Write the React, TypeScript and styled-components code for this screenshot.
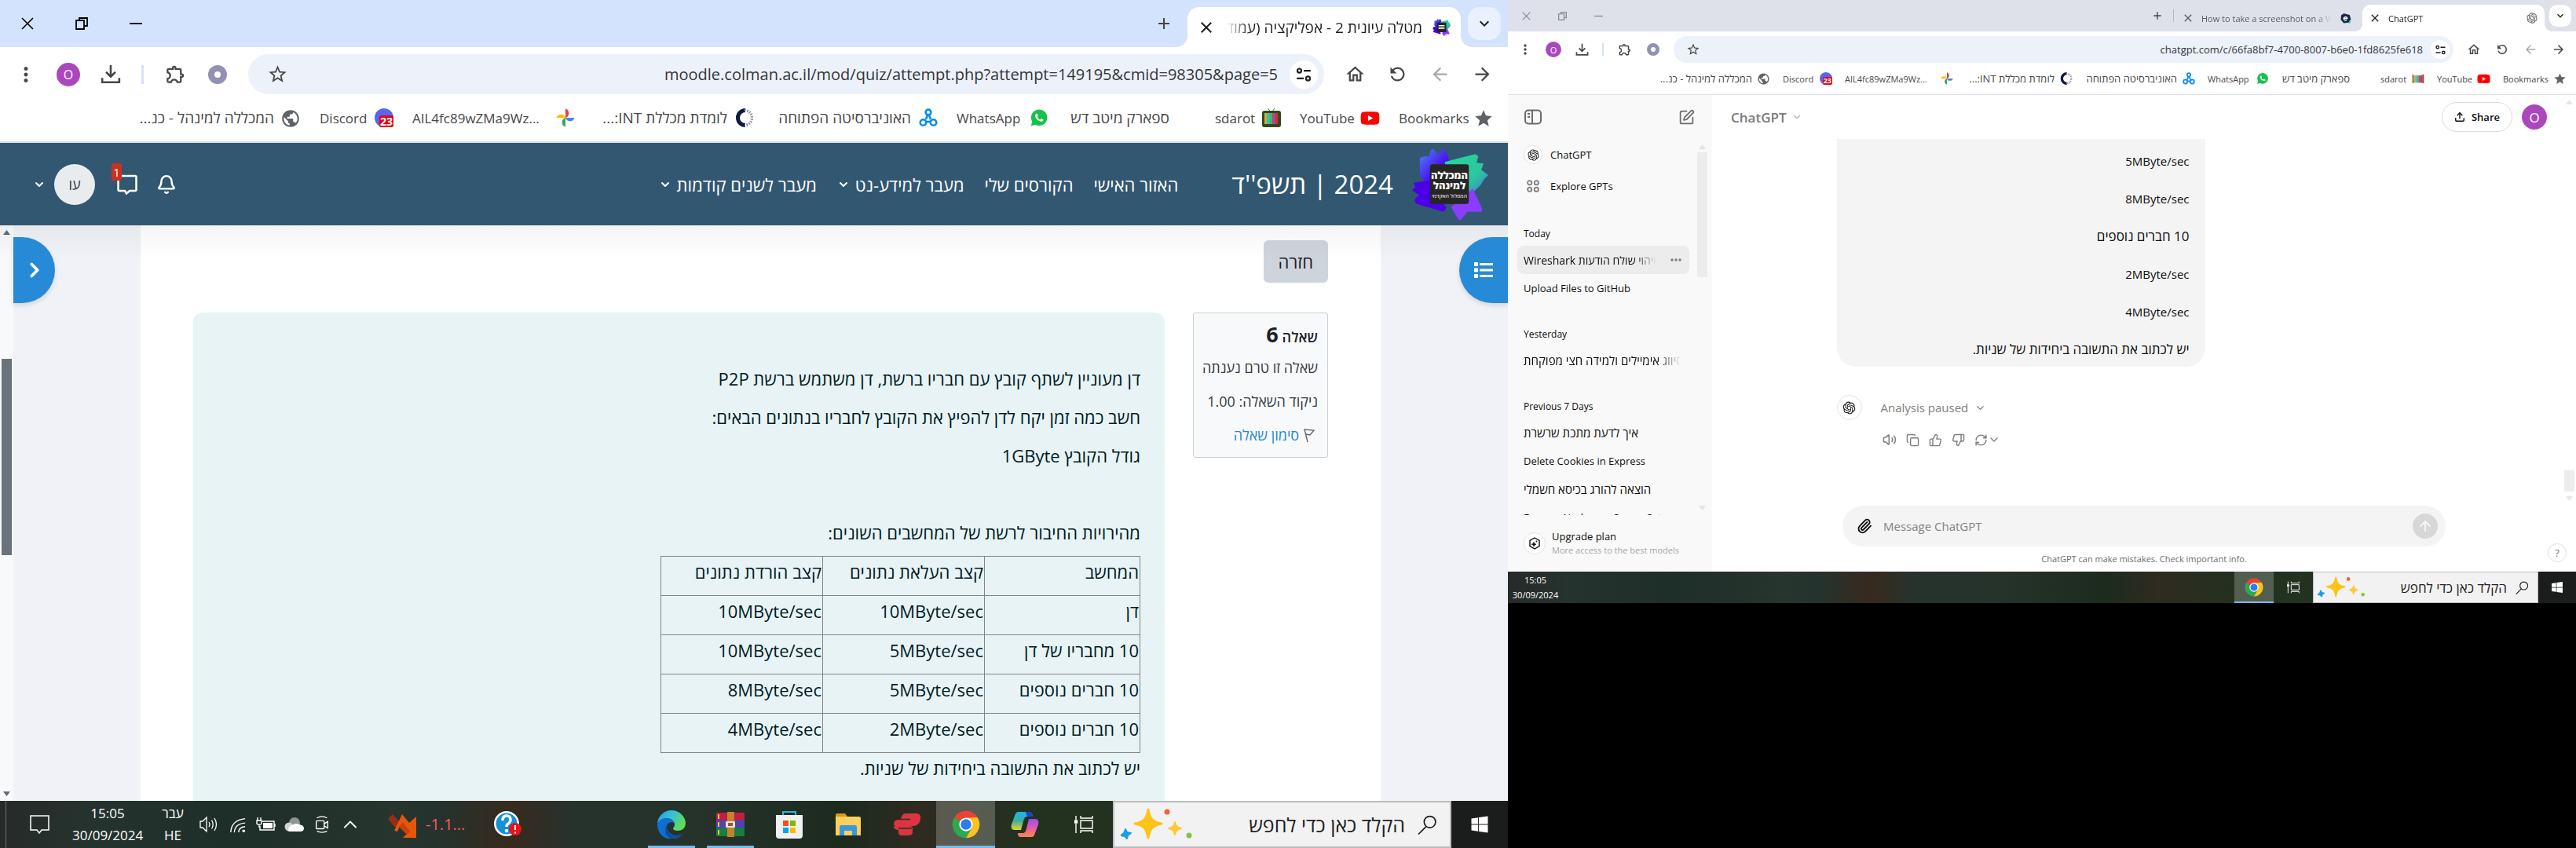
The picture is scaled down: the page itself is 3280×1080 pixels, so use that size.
import React from 'react';
import styled, { createGlobalStyle, css, ThemeProvider } from 'styled-components';
import {
  MdAdd,
  MdArrowBack,
  MdArrowForward,
  MdClose,
  MdKeyboardArrowDown,
  MdMoreVert,
  MdOutlineExtension,
  MdOutlineHome,
  MdPublic,
  MdRefresh,
  MdStar,
  MdStarBorder,
} from 'react-icons/md';
import { IoLogoWhatsapp } from 'react-icons/io';
import { FaYoutube, FaWindows } from 'react-icons/fa';
import { RiOpenaiFill } from 'react-icons/ri';
import {
  ArrowUp,
  Bell,
  ChevronDown,
  ChevronRight,
  ChevronUp,
  Copy,
  Paperclip,
  RefreshCw,
  SquarePen,
  ThumbsDown,
  ThumbsUp,
  Upload,
  Volume2,
} from 'lucide-react';

type Scaled = { theme: { k?: number } };

/* Browser chrome and taskbar sizes are given for the large screen and scaled for the small one. */
const s = (n: number) => ({ theme }: Scaled) => `${Math.round(n * (theme.k ?? 1))}px`;

const GlobalStyle = createGlobalStyle`
  *, *::before, *::after { box-sizing: border-box; }
  body { margin: 0; background: #000; font-family: "Open Sans", "Noto Sans", sans-serif; }
  button, input { font: inherit; color: inherit; margin: 0; padding: 0; border: 0; background: none; outline: none; }
  button { cursor: pointer; }
  a { color: inherit; text-decoration: none; }
  p, h1, h2, h3, ul { margin: 0; padding: 0; font-weight: 400; list-style: none; }
  svg { display: block; flex: none; }
`;

/* ---------- shared pieces ---------- */

const Desktop = styled.div`
  display: grid;
  grid-template-columns: 1920fr 1360fr;
  align-items: start;
`;

const Screen = styled.section<{ $ratio: string }>`
  aspect-ratio: ${(p) => p.$ratio};
  min-width: 0;
  min-height: 0;
  display: flex;
  flex-direction: column;
  overflow: hidden;
  background: #fff;
`;

const Glyph = styled.span<{ $size: number; $color?: string; $flip?: boolean }>`
  display: inline-flex;
  flex: none;
  color: ${(p) => p.$color ?? 'inherit'};
  svg {
    width: ${(p) => s(p.$size)(p)};
    height: ${(p) => s(p.$size)(p)};
    ${(p) => p.$flip && css`transform: scaleX(-1);`}
  }
`;

/* ---------- browser chrome ---------- */

const TabStrip = styled.div<{ $bg: string }>`
  display: flex;
  align-items: flex-end;
  direction: rtl;
  flex: none;
  height: ${s(60)};
  padding-right: ${s(9)};
  background: ${(p) => p.$bg};
`;

const TabSearch = styled.button<{ $bg: string }>`
  display: grid;
  place-items: center;
  width: ${s(42)};
  height: ${s(42)};
  margin-bottom: ${s(9)};
  margin-left: ${s(9)};
  border-radius: ${s(15)};
  background: ${(p) => p.$bg};
  color: #1f1f1f;
`;

const TabShape = styled.div<{ $active?: boolean }>`
  position: relative;
  display: flex;
  align-items: center;
  gap: ${s(13)};
  width: ${s(348)};
  height: ${s(51)};
  padding: 0 ${s(12)};
  color: ${(p) => (p.$active ? '#1f1f1f' : '#5a5c60')};
  ${(p) =>
    p.$active &&
    css`
      background: #fff;
      border-radius: ${s(15)(p as Scaled)} ${s(15)(p as Scaled)} 0 0;
      &::before,
      &::after {
        content: '';
        position: absolute;
        bottom: 0;
        width: ${s(15)(p as Scaled)};
        height: ${s(15)(p as Scaled)};
      }
      &::before {
        right: 100%;
        background: radial-gradient(circle at 0 0, transparent 70%, #fff 71%);
      }
      &::after {
        left: 100%;
        background: radial-gradient(circle at 100% 0, transparent 70%, #fff 71%);
      }
    `}
  & + & {
    margin-right: ${s(9)};
  }
`;

const TabTitle = styled.span<{ $dir: 'rtl' | 'ltr' }>`
  flex: 1;
  min-width: 0;
  direction: ${(p) => p.$dir};
  font-size: ${(p) => s(p.$dir === 'rtl' ? 19 : 17)(p)};
  white-space: nowrap;
  mask-image: linear-gradient(${(p) => (p.$dir === 'rtl' ? 'to left' : 'to right')}, #000 88%, transparent);
`;

const PlainButton = styled.button`
  display: grid;
  place-items: center;
  flex: none;
`;

const NewTab = styled(PlainButton)`
  width: ${s(54)};
  height: ${s(60)};
  margin-right: ${s(3)};
  color: #444;
`;

const TabDivider = styled.span`
  width: 1px;
  height: 16px;
  margin: 0 2px 12px 0;
  background: #b4b7bd;
`;

const WindowControls = styled.div<{ $color: string }>`
  display: flex;
  direction: ltr;
  height: 100%;
  margin-right: auto;
  color: ${(p) => p.$color};
  button {
    width: ${s(69)};
  }
`;

const Toolbar = styled.div`
  display: flex;
  align-items: center;
  direction: rtl;
  flex: none;
  height: ${s(60)};
  padding: ${s(9)} ${s(6)} 0;
  color: #474747;
`;

const ToolButton = styled(PlainButton)<{ $dim?: boolean }>`
  width: ${s(54)};
  height: 100%;
  color: ${(p) => (p.$dim ? '#a9a9a9' : 'inherit')};
`;

const ToolDivider = styled.span`
  width: ${s(3)};
  height: ${s(24)};
  margin: 0 ${s(13)} 0 ${s(12)};
  background: #d3e3fd;
`;

const AddressBar = styled.div`
  display: flex;
  align-items: center;
  flex: 1;
  min-width: 0;
  height: ${s(51)};
  margin: 0 ${s(12)};
  padding: 0 ${s(8)} 0 ${s(24)};
  border-radius: ${s(26)};
  background: #edf1fa;
  input {
    flex: 1;
    min-width: 0;
    direction: ltr;
    text-align: right;
    padding: 0 ${s(15)};
    font-size: ${s(20)};
    color: #333638;
  }
`;

const SiteInfo = styled(PlainButton)`
  width: ${s(36)};
  height: ${s(36)};
  border-radius: 50%;
  background: #fff;
  color: #1f1f1f;
`;

const ProfileDot = styled.span`
  display: grid;
  place-items: center;
  width: ${s(30)};
  height: ${s(30)};
  border-radius: 50%;
  background: #ab47bc;
  color: #fff;
  font-size: ${s(16)};
`;

const GreyRing = styled.span`
  width: ${s(24)};
  height: ${s(24)};
  border: ${s(8)} solid #9191b5;
  border-radius: 50%;
`;

const Bookmarks = styled.nav`
  display: flex;
  align-items: center;
  gap: ${s(24)};
  direction: rtl;
  flex: none;
  height: ${s(62)};
  padding-right: ${s(18)};
  border-bottom: ${s(2)} solid #dfe1e4;
  color: #474747;
`;

const Bookmark = styled.a<{ $width: number; $latin?: boolean }>`
  display: flex;
  align-items: center;
  gap: ${s(10)};
  white-space: nowrap;
  font-size: ${(p) => s(p.$latin ? 17 : 19)(p)};
  > span:last-child {
    width: ${(p) => s(p.$width)(p)};
    direction: ${(p) => (p.$latin ? 'ltr' : 'rtl')};
  }
`;

const FavSlot = styled.span`
  position: relative;
  display: grid;
  place-items: center;
  flex: none;
  width: ${s(24)};
  height: ${s(24)};
`;

const FavBadge = styled.b`
  position: absolute;
  right: 0;
  bottom: 0;
  padding: 0 1px;
  border-radius: 2px;
  background: #e30613;
  color: #fff;
  font-size: ${s(14)};
  line-height: ${s(15)};
`;

const TuneIcon = () => (
  <svg viewBox="0 0 20 20" fill="none" stroke="currentColor" strokeWidth="2">
    <circle cx="5" cy="5.5" r="2.3" />
    <path d="M10 5.5h8M2 14.5h8" />
    <circle cx="15" cy="14.5" r="2.3" />
  </svg>
);

const CloseIcon = () => (
  <svg viewBox="0 0 16 16" fill="none" stroke="currentColor" strokeWidth="1.6">
    <path d="M1 1l14 14M15 1L1 15" />
  </svg>
);

const RestoreIcon = () => (
  <svg viewBox="0 0 16 16" fill="none" stroke="currentColor" strokeWidth="1.8">
    <path d="M1 4h10v11H1zM5 4V1h10v10h-4" />
  </svg>
);

const MinimiseIcon = () => (
  <svg viewBox="0 0 16 16" fill="none" stroke="currentColor" strokeWidth="1.8">
    <path d="M0 8h16" />
  </svg>
);

const CollegeMark = ({ small }: { small?: boolean }) => (
  <svg viewBox="0 0 100 94">
    <defs>
      <linearGradient id="mark-blue" x1="0" y1="0" x2="1" y2="1">
        <stop offset="0" stopColor="#4a8cf7" />
        <stop offset=".6" stopColor="#4a10f0" />
      </linearGradient>
      <linearGradient id="mark-green" x1="0" y1="0" x2="1" y2="1">
        <stop offset="0" stopColor="#1ddb9b" />
        <stop offset=".6" stopColor="#2fc4a0" />
        <stop offset="1" stopColor="#3377d0" />
      </linearGradient>
    </defs>
    <path d="M10 13q6-3 12-2Q23 2 27 1q5 4 6 9 3-7 7-9 6 6 8 17l-5 22-20 6Q9 38 10 33z" fill="url(#mark-blue)" />
    <path d="M42 18L80 8q4 0 5 3l-2 8 9 1-3 8 9 7-6 6-4 7-17 16-24-20z" fill="url(#mark-green)" />
    <path d="M2 45l22-4 20 36-3 5L6 72q-4-2-2-7l5-4-9-7q5-3 4-4z" fill="#4c00e8" />
    <path d="M50 76l28-24 12 26q1 5-5 4l-14 0-7 9q-3 4-5 0z" fill="#8b3dff" />
    <rect x="23" y="21" width="50" height="51" rx="3" fill="#262626" />
    {small ? (
      <path d="M32 34h32v7H32zM32 47h32v7H32z" fill="#fff" />
    ) : (
      <g fill="#fff" fontFamily='"Open Sans", sans-serif' fontWeight="800" textAnchor="middle">
        <text x="48" y="40" fontSize="13">המכללה</text>
        <text x="48" y="53" fontSize="13">למינהל</text>
        <text x="48" y="64" fontSize="7" fontWeight="400">המסלול האקדמי</text>
      </g>
    )}
  </svg>
);

const SdarotIcon = ({ framed }: { framed?: boolean }) => (
  <svg viewBox="0 0 24 24">
    {framed && <path d="M7 0l5 5 4-5" stroke="#5c7a3c" fill="none" />}
    {framed && <rect x="0" y="3" width="24" height="21" rx="3" fill="#33471f" />}
    {['#c9b62b', '#3bc0c9', '#4bb54b', '#b545b0', '#c93636'].map((c, i) => (
      <rect key={c} x={3 + i * 3.4} y="6" width="3.5" height="14" fill={c} />
    ))}
    {!framed && <path d="M20 4h3v17h-3zM1 4h2v17H1z" fill="#a04040" />}
  </svg>
);

const OpenUIcon = () => (
  <svg viewBox="0 0 24 24" fill="none" stroke="#0a8cf0" strokeWidth="2.6">
    <circle cx="12" cy="5" r="3.4" />
    <circle cx="5.5" cy="18" r="3.8" />
    <circle cx="18.5" cy="18" r="3.8" />
    <path d="M11 8.5L9 14M13 8.5L15 14M9 17h6" />
  </svg>
);

const IntIcon = () => (
  <svg viewBox="0 0 24 24" fill="none">
    <path d="M13 2.500a9.500 9.500 0 0 0 0 19" stroke="#0e1b3d" strokeWidth="5" />
    <path d="M12 2.500a9.500 9.500 0 0 1 0 19" stroke="#8a90a0" strokeWidth="3.500" strokeDasharray="1.6 1.6" />
  </svg>
);

const PinwheelIcon = () => (
  <svg viewBox="0 0 24 24">
    <path d="M12 12V.5a6 6 0 0 1 0 11.500z" fill="#ea4335" />
    <path d="M12 12h11.500a6 6 0 0 1-11.500 0z" fill="#4285f4" />
    <path d="M12 12v11.500a6 6 0 0 1 0-11.500z" fill="#34a853" />
    <path d="M12 12H.5a6 6 0 0 1 11.500 0z" fill="#fbbc04" />
  </svg>
);

const SwirlIcon = () => (
  <svg viewBox="0 0 20 20">
    <path d="M2 6l5-5 3 2-6 8z" fill="#e0245e" />
    <path d="M14 18l5-6-1 6z" fill="#27c4b8" />
    <path d="M3 4l6-2 8 2 2 7-4 6-8 1-5-6z" fill="#13294b" />
    <path d="M7 10h6a3 3 0 1 0-1 2.500" fill="none" stroke="#fff" strokeWidth="1.800" />
  </svg>
);

type TabInfo = { title: string; icon: React.ReactNode; dir: 'rtl' | 'ltr'; active?: boolean };

function Browser({
  tabs,
  url,
  strip,
  button,
  controls,
  large,
}: {
  tabs: TabInfo[];
  url: string;
  strip: string;
  button: string;
  controls: string;
  large?: boolean;
}) {
  const bookmarks: { label: string; width: number; latin?: boolean; icon?: React.ReactNode }[] = [
    { label: 'Bookmarks', width: 87, latin: true, icon: <Glyph $size={26} $color="#5f6368"><MdStar /></Glyph> },
    { label: 'YouTube', width: 68, latin: true, icon: <Glyph $size={25} $color="#f00"><FaYoutube /></Glyph> },
    { label: 'sdarot', width: 50, latin: true, icon: <Glyph $size={24}><SdarotIcon framed={large} /></Glyph> },
    { label: 'ספארק מיטב דש', width: 130 },
    { label: 'WhatsApp', width: 83, latin: true, icon: <Glyph $size={24} $color="#14c24a"><IoLogoWhatsapp /></Glyph> },
    { label: 'האוניברסיטה הפתוחה', width: 176, icon: <Glyph $size={24}><OpenUIcon /></Glyph> },
    { label: 'לומדת מכללת INT:...', width: 170, icon: <Glyph $size={24}><IntIcon /></Glyph> },
    { label: 'AIL4fc89wZMa9Wz...', width: 173, latin: true, icon: <Glyph $size={24}><PinwheelIcon /></Glyph> },
    {
      label: 'Discord',
      width: 60,
      latin: true,
      icon: (
        <>
          <Glyph $size={24}>
            <svg viewBox="0 0 24 24"><circle cx="12" cy="12" r="12" fill="#5865f2" /></svg>
          </Glyph>
          <FavBadge>23</FavBadge>
        </>
      ),
    },
    { label: 'המכללה למינהל - כנ...', width: 173, icon: <Glyph $size={26} $color="#5f6368"><MdPublic /></Glyph> },
  ];
  return (
    <>
      <TabStrip $bg={strip}>
        <TabSearch $bg={button} aria-label="Search tabs">
          <Glyph $size={24}><MdKeyboardArrowDown /></Glyph>
        </TabSearch>
        {tabs.map((t) => (
          <TabShape key={t.title} $active={t.active}>
            <FavSlot>{t.icon}</FavSlot>
            <TabTitle $dir={t.dir}>{t.title}</TabTitle>
            <PlainButton aria-label="Close tab"><Glyph $size={24}><MdClose /></Glyph></PlainButton>
          </TabShape>
        ))}
        {tabs.length > 1 && <TabDivider />}
        <NewTab aria-label="New tab"><Glyph $size={24}><MdAdd /></Glyph></NewTab>
        <WindowControls $color={controls}>
          <PlainButton aria-label="Close window"><Glyph $size={16}><CloseIcon /></Glyph></PlainButton>
          <PlainButton aria-label="Restore window"><Glyph $size={16}><RestoreIcon /></Glyph></PlainButton>
          <PlainButton aria-label="Minimise window"><Glyph $size={16}><MinimiseIcon /></Glyph></PlainButton>
        </WindowControls>
      </TabStrip>
      <Toolbar>
        <ToolButton aria-label="Back"><Glyph $size={27}><MdArrowForward /></Glyph></ToolButton>
        <ToolButton aria-label="Forward" $dim><Glyph $size={27}><MdArrowBack /></Glyph></ToolButton>
        <ToolButton aria-label="Reload"><Glyph $size={27} $flip><MdRefresh /></Glyph></ToolButton>
        <ToolButton aria-label="Home"><Glyph $size={27}><MdOutlineHome /></Glyph></ToolButton>
        <AddressBar>
          <SiteInfo aria-label="Site information"><Glyph $size={22}><TuneIcon /></Glyph></SiteInfo>
          <input aria-label="Address" defaultValue={url} />
          <PlainButton aria-label="Bookmark this page"><Glyph $size={27}><MdStarBorder /></Glyph></PlainButton>
        </AddressBar>
        <ToolButton aria-label="Extension"><GreyRing /></ToolButton>
        <ToolButton aria-label="Extensions"><Glyph $size={27}><MdOutlineExtension /></Glyph></ToolButton>
        <ToolDivider />
        <ToolButton aria-label="Downloads">
          <Glyph $size={26}>
            <svg viewBox="0 0 24 24" fill="none" stroke="currentColor" strokeWidth="2.4">
              <path d="M12 1v13M6.500 9l5.500 5.500L17.500 9M2 16v5h20v-5" />
            </svg>
          </Glyph>
        </ToolButton>
        <ToolButton aria-label="Profile"><ProfileDot>O</ProfileDot></ToolButton>
        <ToolButton aria-label="Menu"><Glyph $size={30}><MdMoreVert /></Glyph></ToolButton>
      </Toolbar>
      <Bookmarks>
        {bookmarks.map((b) => (
          <Bookmark key={b.label} href="#" $width={b.width} $latin={b.latin}>
            <FavSlot>{b.icon}</FavSlot>
            <span>{b.label}</span>
          </Bookmark>
        ))}
      </Bookmarks>
    </>
  );
}

/* ---------- taskbar ---------- */

const Bar = styled.footer`
  display: flex;
  direction: rtl;
  flex: none;
  height: ${s(60)};
  color: #fff;
  background: linear-gradient(
    90deg,
    #272a28 0,
    #25332f 6%,
    #1e2e28 15%,
    #26352e 26%,
    #24332d 29%,
    #38291e 34%,
    #26332d 38%,
    #25332b 46%,
    #1d2a1e 56%,
    #2f2b20 61%,
    #23311f 68%,
    #243622 100%
  );
`;

const StartButton = styled(PlainButton)`
  width: ${s(72)};
  background: #1b1c1c;
`;

const SearchBox = styled.label`
  display: flex;
  align-items: center;
  width: ${s(431)};
  padding: 0 ${s(16)} 0 ${s(8)};
  border: ${s(2)} solid #bcbcbc;
  background: #f2f2f2;
  color: #1b1b1b;
  input {
    flex: 1;
    min-width: 0;
    padding-right: ${s(16)};
    font-size: ${s(25)};
  }
  input::placeholder {
    color: #222;
    opacity: 1;
  }
`;

const Sparkles = styled.svg`
  width: ${s(92)};
  height: ${s(54)};
`;

const AppButton = styled(PlainButton)<{ $mark?: 'open' | 'active' }>`
  width: ${s(75)};
  ${(p) =>
    p.$mark &&
    css`
      background: linear-gradient(#76b9ed, #76b9ed) center bottom / ${p.$mark === 'active' ? '100%' : '80%'} ${s(3)(p as Scaled)}
        no-repeat ${p.$mark === 'active' ? 'rgba(255, 255, 255, 0.22)' : 'transparent'};
    `}
`;

const Tray = styled.div`
  display: flex;
  align-items: center;
  direction: ltr;
  margin-right: auto;
  font-size: ${s(17)};
  line-height: ${s(28)};
  text-align: center;
`;

const ShowDesktop = styled(PlainButton)`
  width: 8px;
  height: 100%;
  border-right: 1px solid #6d736f;
`;

const NoticeButton = styled(PlainButton)`
  width: 84px;
`;

const Clock = styled.time<{ $width: number }>`
  width: ${(p) => p.$width}px;
  white-space: pre-line;
`;

const Language = styled.span`
  width: 66px;
  padding-left: 10px;
  white-space: pre-line;
`;

const TrayButton = styled(PlainButton)`
  width: 36px;
`;

const Stock = styled.span`
  display: flex;
  align-items: center;
  gap: 12px;
  margin: 0 36px 0 30px;
  color: #ff5a5a;
  font-size: 20px;
`;

const SearchGlyph = () => (
  <svg viewBox="0 0 24 24" fill="none" stroke="currentColor" strokeWidth="1.6">
    <circle cx="15" cy="8.5" r="7" />
    <path d="M10.500 14L1 23.500" />
  </svg>
);

const TaskViewIcon = () => (
  <svg viewBox="0 0 24 24" fill="none" stroke="currentColor" strokeWidth="1.4">
    <path d="M8 7h15v10H8zM8 1v3h15V1M8 23v-3h15v3M2 1v5M2 11v12" />
    <path d="M.5 7h3v3h-3z" fill="currentColor" />
  </svg>
);

const ChromeLogo = () => (
  <svg viewBox="0 0 48 48">
    <path d="M24 24L4.080 12.500A23 23 0 0 1 43.920 12.500z" fill="#ea4335" />
    <path d="M4.080 12.500A23 23 0 0 0 24 47L34 29.500 24 24z" fill="#2da94f" />
    <path d="M43.920 12.500A23 23 0 0 1 24 47l10-17.500V12.500z" fill="#fcc31e" />
    <path d="M24 12.500h19.900L34 30z" fill="#fcc31e" />
    <circle cx="24" cy="24" r="11.500" fill="#fff" />
    <circle cx="24" cy="24" r="9" fill="#2f7bf0" />
  </svg>
);

const CopilotLogo = () => (
  <svg viewBox="0 0 36 36">
    <defs>
      <linearGradient id="cp-a" x1="0" y1="0" x2="0" y2="1">
        <stop offset="0" stopColor="#19b5f0" />
        <stop offset=".5" stopColor="#3fae9c" />
        <stop offset="1" stopColor="#e8d42c" />
      </linearGradient>
      <linearGradient id="cp-b" x1="0" y1="0" x2="0" y2="1">
        <stop offset="0" stopColor="#9a4cf0" />
        <stop offset=".6" stopColor="#ee5f9c" />
        <stop offset="1" stopColor="#fb8a4a" />
      </linearGradient>
    </defs>
    <path d="M10 2h13c3 0 4 2 5 5l-8 1c-2 0-3 2-4 6l-3 11H5c-4 0-5-3-4-7L5 7c1-3 2-5 5-5z" fill="url(#cp-a)" />
    <path d="M19 2h4c3 0 4 2 5 6h-5c-2 0-3-1-4-6z" fill="#1c45c8" />
    <path d="M26 34H13c-3 0-4-2-4-5h6c3 0 4-2 5-6l3-12h8c4 0 5 3 4 7l-4 11c-1 3-2 5-5 5z" fill="url(#cp-b)" />
  </svg>
);

const RibbonLogo = () => (
  <svg viewBox="0 0 36 30">
    <path d="M16 1h14q6 0 5 7-1 8-8 9H7q-6 0-6-2 0-6 6-6h3q1-8 6-8z" fill="#da3540" />
    <path d="M1 17h20q4 0 4 3v6q-1 3-5 3h-9q-4 0-4-4v-3q-6 0-6-5z" fill="#da3540" />
    <path d="M8 8.500h14M7 20h17" stroke="#27301f" strokeWidth="1.500" />
    <path d="M26 18h10v12H26z" fill="none" />
  </svg>
);

const FolderLogo = () => (
  <svg viewBox="0 0 32 28">
    <path d="M0 2q0-2 2-2h10l3 4H0z" fill="#d99a1a" />
    <path d="M0 4h30q2 0 2 2v22H0z" fill="#fbd05c" />
    <path d="M5 28V17q0-2 2-2h18q2 0 2 2v11h-6v-6H11v6z" fill="#3d96dc" />
  </svg>
);

const StoreLogo = () => (
  <svg viewBox="0 0 34 36">
    <path d="M9 8V2h16v6" fill="none" stroke="#28b4ea" strokeWidth="2" />
    <path d="M0 6h34v26q0 4-4 4H4q-4 0-4-4z" fill="#f1f1f1" />
    <path d="M9 13h7v7H9z" fill="#f25022" />
    <path d="M18 13h7v7h-7z" fill="#7fba00" />
    <path d="M9 22h7v7H9z" fill="#00a4ef" />
    <path d="M18 22h7v7h-7z" fill="#ffb900" />
  </svg>
);

const WinrarLogo = () => (
  <svg viewBox="0 0 36 32">
    <rect y="1" width="36" height="10" rx="1" fill="#c01e45" />
    <rect y="11" width="36" height="10" fill="#4a46b0" />
    <rect y="21" width="36" height="10" rx="1" fill="#15803a" />
    <path d="M3 3v6M3 13v6M3 23v6" stroke="#f0c040" strokeWidth="2" />
    <rect x="14" width="9" height="32" fill="#c8802c" />
    <rect x="12" y="12" width="12" height="8" rx="1" fill="#e8e2d4" />
    <rect x="15" y="14" width="6" height="4" fill="#9a5a1c" />
  </svg>
);

const EdgeLogo = () => (
  <svg viewBox="0 0 36 36">
    <defs>
      <linearGradient id="edge-top" x1="0" y1="0" x2="1" y2=".5">
        <stop offset="0" stopColor="#1f9de8" />
        <stop offset=".5" stopColor="#35c1d8" />
        <stop offset="1" stopColor="#62dc52" />
      </linearGradient>
    </defs>
    <path d="M18 0a18 18 0 0 1 18 16c0 7-5 10-10 10-4 0-6-1-6-3 0-1 2-2 2-5 0-4-4-8-10-8C6 10 1 14 0 18A18 18 0 0 1 18 0z" fill="url(#edge-top)" />
    <path d="M0 18c1-5 6-8 12-8 5 0 9 3 10 7-3-3-9-2-10 3-1 6 5 12 13 12 3 0 6-1 7-2a18 18 0 0 1-32-12z" fill="#0f6fd0" />
    <path d="M12 19c-1 7 5 13 13 13 3 0 5-1 7-2-4 5-9 6-14 6C10 34 8 25 12 19z" fill="#0b4fa0" />
  </svg>
);

const HelpLogo = () => (
  <svg viewBox="0 0 36 36">
    <circle cx="17" cy="17" r="16" fill="#fff" />
    <circle cx="17" cy="17" r="13.500" fill="#1591d8" />
    <path d="M12 13q0-6 5-6t5 5q0 3-3 5-2 1-2 4" fill="none" stroke="#fff" strokeWidth="3.500" />
    <circle cx="17" cy="26" r="2.200" fill="#fff" />
    <circle cx="28" cy="24" r="8" fill="#e8141c" />
    <path d="M28 19v6M28 27.500v2" stroke="#fff" strokeWidth="2" />
  </svg>
);

const SparkleArt = () => (
  <Sparkles viewBox="0 0 92 54" aria-hidden="true">
    <path d="M35 8c2 12 6 16 17 18-11 2-15 6-17 18-2-12-6-16-17-18 11-2 15-6 17-18z" fill="#fcc419" stroke="#fcc419" strokeWidth="3" strokeLinejoin="round" />
    <path d="M69 24c1 5 3 7 8 8-5 1-7 3-8 8-1-5-3-7-8-8 5-1 7-3 8-8z" fill="#fcc93a" stroke="#fcc93a" strokeWidth="2" strokeLinejoin="round" />
    <path d="M6 33l2 4 5 1-4 3-1 4-3-3-5-1 4-3z" fill="#1aa0e8" stroke="#1aa0e8" strokeWidth="2" strokeLinejoin="round" />
    <circle cx="59" cy="11" r="3.500" fill="#f0642c" />
    <circle cx="87" cy="41" r="3.500" fill="#84c440" />
  </Sparkles>
);

function Taskbar({ full }: { full?: boolean }) {
  return (
    <Bar>
      <StartButton aria-label="Start"><Glyph $size={24}><FaWindows /></Glyph></StartButton>
      <SearchBox>
        <Glyph $size={25}><SearchGlyph /></Glyph>
        <input aria-label="חיפוש" placeholder="הקלד כאן כדי לחפש" />
        <SparkleArt />
      </SearchBox>
      <AppButton aria-label="Task view"><Glyph $size={24}><TaskViewIcon /></Glyph></AppButton>
      {full && <AppButton aria-label="Copilot"><Glyph $size={36}><CopilotLogo /></Glyph></AppButton>}
      <AppButton aria-label="Chrome" $mark="active"><Glyph $size={36}><ChromeLogo /></Glyph></AppButton>
      {full && (
        <>
          <AppButton aria-label="Assistant"><Glyph $size={36}><RibbonLogo /></Glyph></AppButton>
          <AppButton aria-label="Files"><Glyph $size={32}><FolderLogo /></Glyph></AppButton>
          <AppButton aria-label="Store"><Glyph $size={36}><StoreLogo /></Glyph></AppButton>
          <AppButton aria-label="Archive" $mark="open"><Glyph $size={36}><WinrarLogo /></Glyph></AppButton>
          <AppButton aria-label="Edge" $mark="open"><Glyph $size={36}><EdgeLogo /></Glyph></AppButton>
        </>
      )}
      <Tray>
        {full && (
          <>
            <ShowDesktop aria-label="Show desktop" />
            <NoticeButton aria-label="Notifications">
              <Glyph $size={25}>
                <svg viewBox="0 0 25 25" fill="none" stroke="currentColor" strokeWidth="1.5">
                  <path d="M1 1h23v18h-9l-3 4-3-4H1z" />
                </svg>
              </Glyph>
            </NoticeButton>
          </>
        )}
        <Clock $width={full ? 90 : 70}>{'15:05\n30/09/2024'}</Clock>
        {full && (
          <>
            <Language>{'עבר\nHE'}</Language>
            <TrayButton aria-label="Volume">
              <Glyph $size={24}>
                <svg viewBox="0 0 24 24" fill="none" stroke="currentColor" strokeWidth="1.3">
                  <path d="M1 8h3l5-5v18l-5-5H1zM12 9q2 3 0 6M15.500 6.500q3.500 5.500 0 11M19 4q5 8 0 16" />
                </svg>
              </Glyph>
            </TrayButton>
            <TrayButton aria-label="Network">
              <Glyph $size={22}>
                <svg viewBox="0 0 24 24" fill="none" stroke="currentColor" strokeWidth="1.5">
                  <path d="M3 23Q4 6 23 4M8 23Q9 11 23 10M14 23q0-7 9-8" />
                  <circle cx="21" cy="21" r="2" fill="currentColor" stroke="none" />
                </svg>
              </Glyph>
            </TrayButton>
            <TrayButton aria-label="Battery">
              <Glyph $size={25}>
                <svg viewBox="0 0 25 25" fill="none" stroke="currentColor" strokeWidth="1.4">
                  <path d="M8 8h15v11H5v-5M24 11v4" />
                  <path d="M9 10h12v7H9z" fill="currentColor" stroke="none" />
                  <path d="M2 3v4M6 3v4M1 7h6v4q-3 3-6 0zM4 12v4" />
                </svg>
              </Glyph>
            </TrayButton>
            <TrayButton aria-label="Cloud">
              <Glyph $size={25}>
                <svg viewBox="0 0 25 25">
                  <circle cx="13" cy="10" r="7" fill="#8f9592" />
                  <circle cx="6" cy="15" r="5.500" fill="#cfd2d1" />
                  <path d="M5 20q0-7 7-8 3-2 7 0 6 1 6 5t-5 4H6z" fill="#fff" />
                </svg>
              </Glyph>
            </TrayButton>
            <TrayButton aria-label="Meet now">
              <Glyph $size={22}>
                <svg viewBox="0 0 24 24" fill="none" stroke="currentColor" strokeWidth="1.5">
                  <rect x="4" y="7" width="11" height="11" rx="1" />
                  <path d="M15 11l5-3v9l-5-3M5 3q7-4 14 0M5 21.500q7 3 14 0" />
                </svg>
              </Glyph>
            </TrayButton>
            <TrayButton aria-label="Hidden icons"><Glyph $size={28}><ChevronUp strokeWidth={1.6} /></Glyph></TrayButton>
            <Stock>
              <svg width="36" height="33" viewBox="0 0 36 33">
                <path d="M0 9l6-6 11 12-5 8z" fill="#9a2c16" />
                <path d="M8 24L18 3l9 11 9-8v27H19l6-6-10-9-3 7z" fill="#e8560c" />
                <path d="M14 19l5-6 9 12-4 4z" fill="#c84208" />
              </svg>
              -1.1...
            </Stock>
            <Glyph $size={36}><HelpLogo /></Glyph>
          </>
        )}
      </Tray>
    </Bar>
  );
}

/* ---------- course site ---------- */

const SiteHeader = styled.header`
  display: flex;
  align-items: center;
  direction: rtl;
  flex: none;
  height: 105px;
  padding: 0 23px 0 42px;
  background: #325771;
  color: #fff;
`;

const SiteLogo = styled.a`
  svg {
    width: 99px;
    height: 94px;
  }
`;

const SiteTitle = styled.h1`
  margin: 0 24px 0 68px;
  font-size: 33px;
  line-height: 48px;
  white-space: nowrap;
`;

const SiteNav = styled.nav`
  display: flex;
  gap: 26px;
  font-size: 22px;
  font-weight: 500;
  white-space: nowrap;
  a {
    display: flex;
    align-items: center;
    gap: 7px;
  }
`;

const HeaderTools = styled.div`
  display: flex;
  align-items: center;
  margin-right: auto;
`;

const ChatButton = styled(PlainButton)`
  position: relative;
  margin: 0 24px 0 28px;
`;

const Count = styled.span`
  position: absolute;
  right: 20px;
  bottom: 18px;
  width: 13px;
  border-radius: 3px;
  background: #ca3120;
  font-size: 15px;
  line-height: 22px;
`;

const Initials = styled.button`
  display: grid;
  place-items: center;
  width: 52px;
  height: 52px;
  margin-left: 11px;
  border-radius: 50%;
  background: #e9ecef;
  color: #343a40;
  font-size: 18px;
`;

const SiteBody = styled.div`
  position: relative;
  display: flex;
  flex: 1;
  min-height: 0;
  background: #f1f2f7;
`;

const ScrollTrack = styled.div`
  display: flex;
  flex-direction: column;
  align-items: center;
  flex: none;
  width: 17px;
  padding: 6px 0;
  background: #f8f9fb;
  color: #5f6a75;
`;

const ScrollThumb = styled.span`
  width: 13px;
  height: 250px;
  margin: 158px 0 auto;
  background: #6a737b;
`;

const Page = styled.main`
  flex: 1;
  min-width: 0;
  overflow: hidden;
  direction: rtl;
  margin: 0 162px;
  padding: 19px 67px 0;
  background: #fff;
`;

const TopShade = styled.div`
  position: absolute;
  inset: 0 0 auto 0;
  height: 44px;
  background: linear-gradient(rgba(0, 20, 10, 0.045), rgba(0, 0, 0, 0));
  pointer-events: none;
`;

const BackLink = styled.button`
  display: block;
  height: 54px;
  padding: 0 19px;
  border-radius: 6px;
  background: #ced4dc;
  color: #1d2125;
  font-size: 22px;
`;

const QuestionRow = styled.div`
  display: flex;
  gap: 36px;
  height: 100%;
  margin-top: 38px;
`;

const InfoBox = styled.aside`
  flex: none;
  align-self: flex-start;
  width: 172px;
  height: 185px;
  padding: 8px 12px;
  border: 1px solid #cad0d7;
  border-radius: 3px;
  background: #f8f9fb;
  color: #343a40;
  font-size: 18px;
  line-height: 43px;
  white-space: nowrap;
`;

const InfoTitle = styled.h2`
  display: flex;
  align-items: baseline;
  gap: 5px;
  height: 40px;
  line-height: 38px;
  color: #1d2125;
  font-size: 18px;
  font-weight: 600;
  b {
    font-size: 27px;
    font-weight: 700;
  }
`;

const FlagLink = styled.a`
  display: flex;
  align-items: center;
  gap: 6px;
  padding-right: 4px;
  color: #2388d4;
`;

const Question = styled.article`
  flex: 1;
  min-width: 0;
  padding: 65px 31px 0;
  border-radius: 12px;
  background: #e7f3f5;
  color: #001a1e;
  font-size: 22px;
  line-height: 38px;
  p {
    min-height: 39px;
    margin-bottom: 10px;
  }
`;

const RateTable = styled.table`
  border-collapse: collapse;
  table-layout: fixed;
  width: 611px;
  td,
  th {
    height: 50px;
    padding: 0 1px;
    border: 1px solid #808588;
    font-weight: 400;
    text-align: right;
    vertical-align: top;
    white-space: nowrap;
  }
  th:first-child {
    width: 198px;
  }
`;

const Drawer = styled.button<{ $side: 'left' | 'right' }>`
  position: absolute;
  top: 15px;
  display: grid;
  place-items: center;
  height: 84px;
  color: #fff;
  background: #268ad6;
  box-shadow: 0 3px 6px rgba(0, 0, 0, 0.12);
  ${(p) =>
    p.$side === 'left'
      ? css`
          left: 17px;
          width: 53px;
          border-radius: 0 42px 42px 0;
        `
      : css`
          right: 0;
          width: 62px;
          border-radius: 42px 0 0 42px;
        `}
`;

const ArrowHead = ({ down }: { down?: boolean }) => (
  <svg width="9" height="6" viewBox="0 0 9 6" fill="currentColor">
    <path d={down ? 'M0 0h9L4.500 6z' : 'M0 6h9L4.500 0z'} />
  </svg>
);

const rates = [
  ['דן', '10MByte/sec', '10MByte/sec'],
  ['10 מחבריו של דן', '5MByte/sec', '10MByte/sec'],
  ['10 חברים נוספים', '5MByte/sec', '8MByte/sec'],
  ['10 חברים נוספים', '2MByte/sec', '4MByte/sec'],
];

function CourseSite() {
  return (
    <>
      <SiteHeader>
        <SiteLogo href="#" aria-label="המכללה למינהל"><CollegeMark /></SiteLogo>
        <SiteTitle>2024 | תשפ''ד</SiteTitle>
        <SiteNav>
          <a href="#">האזור האישי</a>
          <a href="#">הקורסים שלי</a>
          <a href="#">מעבר למידע-נט <ChevronDown size={16} strokeWidth={3} /></a>
          <a href="#">מעבר לשנים קודמות <ChevronDown size={16} strokeWidth={3} /></a>
        </SiteNav>
        <HeaderTools>
          <PlainButton aria-label="התראות"><Bell size={26} strokeWidth={2.2} /></PlainButton>
          <ChatButton aria-label="הודעות">
            <svg width="26" height="26" viewBox="0 0 26 26" fill="none" stroke="currentColor" strokeWidth="2.5">
              <path d="M3 2h20q1.500 0 1.500 1.500v16q0 1.500-1.500 1.500h-7l-4 3.500L10 21H3q-1.500 0-1.500-1.500v-16Q1.500 2 3 2z" />
            </svg>
            <Count>1</Count>
          </ChatButton>
          <Initials>עו</Initials>
          <ChevronDown size={16} strokeWidth={3} />
        </HeaderTools>
      </SiteHeader>
      <SiteBody>
        <ScrollTrack>
          <ArrowHead />
          <ScrollThumb />
          <ArrowHead down />
        </ScrollTrack>
        <Page>
          <BackLink>חזרה</BackLink>
          <QuestionRow>
            <InfoBox>
              <InfoTitle>שאלה <b>6</b></InfoTitle>
              <p>שאלה זו טרם נענתה</p>
              <p>ניקוד השאלה: 1.00</p>
              <FlagLink href="#">
                <svg width="14" height="18" viewBox="0 0 14 18" fill="none" stroke="#666" strokeWidth="1.4">
                  <path d="M5 17L1 1l12 1-5 6-5-1" />
                </svg>
                סימון שאלה
              </FlagLink>
            </InfoBox>
            <Question>
              <p>דן מעוניין לשתף קובץ עם חבריו ברשת, דן משתמש ברשת P2P</p>
              <p>חשב כמה זמן יקח לדן להפיץ את הקובץ לחבריו בנתונים הבאים:</p>
              <p>גודל הקובץ 1GByte</p>
              <p />
              <p>מהירויות החיבור לרשת של המחשבים השונים:</p>
              <RateTable>
                <thead>
                  <tr>
                    <th scope="col">המחשב</th>
                    <th scope="col">קצב העלאת נתונים</th>
                    <th scope="col">קצב הורדת נתונים</th>
                  </tr>
                </thead>
                <tbody>
                  {rates.map((r, i) => (
                    <tr key={i}>
                      {r.map((c, j) => <td key={j}>{c}</td>)}
                    </tr>
                  ))}
                </tbody>
              </RateTable>
              <p>יש לכתוב את התשובה ביחידות של שניות.</p>
            </Question>
          </QuestionRow>
        </Page>
        <TopShade />
        <Drawer $side="left" aria-label="פתיחת מגירה"><ChevronRight size={30} strokeWidth={3} /></Drawer>
        <Drawer $side="right" aria-label="תוכן הקורס">
          <svg width="24" height="20" viewBox="0 0 24 20" fill="currentColor">
            <path d="M0 0h5v5H0zM7 1h17v3H7zM0 7.500h5v5H0zM7 8.500h17v3H7zM0 15h5v5H0zM7 16h17v3H7z" />
          </svg>
        </Drawer>
      </SiteBody>
    </>
  );
}

/* ---------- chat app ---------- */

const ChatApp = styled.div`
  display: flex;
  flex: 1;
  min-height: 0;
  color: #0d0d0d;
`;

const Sidebar = styled.aside`
  position: relative;
  display: flex;
  flex-direction: column;
  flex: none;
  width: 260px;
  background: #f9f9f9;
`;

const SideHead = styled.div`
  display: flex;
  align-items: center;
  justify-content: space-between;
  flex: none;
  height: 56px;
  padding: 0 22px 0 20px;
  color: #6b6b6b;
`;

const SideScroll = styled.nav`
  flex: 1;
  min-height: 0;
  overflow: hidden;
  padding: 0 29px 0 12px;
  font-size: 13px;
`;

const SideLink = styled.a`
  display: flex;
  align-items: center;
  gap: 10px;
  height: 40px;
  padding-left: 8px;
`;

const RoundMark = styled.span<{ $size: number; $plain?: boolean }>`
  display: grid;
  place-items: center;
  flex: none;
  width: ${(p) => p.$size}px;
  height: ${(p) => p.$size}px;
  border: 1px solid ${(p) => (p.$plain ? 'transparent' : '#e3e3e3')};
  border-radius: 50%;
  background: ${(p) => (p.$plain ? 'none' : '#fff')};
`;

const SideLabel = styled.h3`
  height: 30px;
  margin-top: 26px;
  padding-left: 8px;
  font-size: 12px;
  font-weight: 500;
  line-height: 30px;
`;

const Chat = styled.a<{ $current?: boolean }>`
  display: flex;
  align-items: center;
  justify-content: space-between;
  gap: 14px;
  height: 36px;
  padding: 0 10px 0 8px;
  border-radius: 8px;
  background: ${(p) => (p.$current ? '#ececec' : 'none')};
  white-space: nowrap;
`;

const ChatTitle = styled.span<{ $fade?: boolean; $size: number }>`
  display: flex;
  min-width: 0;
  font-size: ${(p) => p.$size}px;
  mask-image: ${(p) => (p.$fade ? 'linear-gradient(to right, #000 84%, transparent)' : 'none')};
`;

const SideFoot = styled.a`
  display: flex;
  align-items: center;
  gap: 8px;
  flex: none;
  height: 72px;
  padding-left: 20px;
  font-size: 13px;
  line-height: 18px;
  small {
    display: block;
    color: #a6a6a6;
    font-size: 11px;
  }
`;

const SideTrack = styled.div`
  position: absolute;
  top: 63px;
  right: 6px;
  bottom: 78px;
  width: 13px;
  display: flex;
  flex-direction: column;
  align-items: center;
  color: #e3e3e3;
`;

const SideThumb = styled.span`
  width: 13px;
  height: 159px;
  margin: 4px 0 auto;
  background: #ececec;
`;

const Main = styled.main`
  position: relative;
  display: flex;
  flex-direction: column;
  flex: 1;
  min-width: 0;
`;

const MainHead = styled.div`
  display: flex;
  align-items: center;
  flex: none;
  height: 56px;
  padding: 0 37px 0 24px;
`;

const ModelButton = styled.button`
  display: flex;
  align-items: center;
  gap: 6px;
  margin-right: auto;
  color: #7a7a7a;
  font-size: 17px;
  font-weight: 600;
`;

const ShareButton = styled.button`
  display: flex;
  align-items: center;
  gap: 8px;
  height: 38px;
  margin-right: 12px;
  padding: 0 15px;
  border: 1px solid #dcdcdc;
  border-radius: 19px;
  font-size: 13px;
  font-weight: 600;
`;

const Avatar = styled.span`
  display: grid;
  place-items: center;
  width: 32px;
  height: 32px;
  border-radius: 50%;
  background: #ab47bc;
  color: #fff;
  font-size: 17px;
`;

const Thread = styled.div`
  flex: 1;
  min-height: 0;
  overflow: hidden;
  width: 768px;
  max-width: 100%;
  margin: 0 auto;
  padding-right: 15px;
  box-sizing: content-box;
`;

const Bubble = styled.div`
  display: flex;
  flex-direction: column;
  gap: 20px;
  width: 469px;
  padding: 14px 20px 8px;
  border-radius: 0 0 24px 24px;
  background: #f4f4f4;
  direction: rtl;
  line-height: 28px;
`;

const Line = styled.p<{ $hebrew: boolean }>`
  font-size: ${(p) => (p.$hebrew ? 17 : 15)}px;
`;

const Reply = styled.div`
  display: flex;
  align-items: center;
  gap: 24px;
  margin-top: 36px;
  color: #7d7d7d;
  font-size: 15px;
  button {
    display: flex;
    align-items: center;
    gap: 8px;
  }
`;

const Actions = styled.div`
  display: flex;
  align-items: center;
  gap: 12px;
  margin: 16px 0 0 58px;
  color: #7d7d7d;
  button {
    display: flex;
  }
`;

const Composer = styled.form`
  display: flex;
  align-items: center;
  gap: 14px;
  flex: none;
  width: 768px;
  max-width: 100%;
  height: 52px;
  margin: 0 auto;
  padding: 0 10px 0 18px;
  border-radius: 26px;
  background: #f4f4f4;
  input {
    flex: 1;
    min-width: 0;
    font-size: 15px;
  }
  input::placeholder {
    color: #828282;
    opacity: 1;
  }
`;

const SendButton = styled(PlainButton)`
  width: 32px;
  height: 32px;
  border-radius: 50%;
  background: #d7d7d7;
  color: #f4f4f4;
`;

const Notice = styled.p`
  height: 32px;
  color: #6b6b6b;
  font-size: 11px;
  line-height: 32px;
  text-align: center;
`;

const HelpButton = styled.button`
  position: absolute;
  right: 12px;
  bottom: 12px;
  width: 24px;
  height: 24px;
  border: 1px solid #e0e0e0;
  border-radius: 50%;
  color: #6b6b6b;
  font-size: 12px;
`;

const MainTrack = styled.div`
  position: absolute;
  top: 6px;
  right: 2px;
  bottom: 90px;
  width: 13px;
  display: flex;
  flex-direction: column;
  align-items: center;
  color: #e6e6e6;
`;

const MainThumb = styled.span`
  width: 13px;
  height: 27px;
  margin: auto 0 6px;
  background: #ececec;
`;

type ChatInfo = { title: string; size?: number; current?: boolean; fade?: boolean };

const groups: { label: string; chats: ChatInfo[] }[] = [
  {
    label: 'Today',
    chats: [{ title: 'זיהוי שולח הודעות Wireshark', size: 14, current: true, fade: true }, { title: 'Upload Files to GitHub' }],
  },
  { label: 'Yesterday', chats: [{ title: 'סיווג אימיילים ולמידה חצי מפוקחת', size: 15, fade: true }] },
  {
    label: 'Previous 7 Days',
    chats: [
      { title: 'איך לדעת מתכת שרשרת', size: 15 },
      { title: 'Delete Cookies in Express' },
      { title: 'הוצאה להורג בכיסא חשמלי', size: 15 },
      { title: 'Express Nodemon Server Setup' },
    ],
  },
];

const lines = [
  { text: '5MByte/sec', hebrew: false },
  { text: '8MByte/sec', hebrew: false },
  { text: '10 חברים נוספים', hebrew: true },
  { text: '2MByte/sec', hebrew: false },
  { text: '4MByte/sec', hebrew: false },
  { text: 'יש לכתוב את התשובה ביחידות של שניות.', hebrew: true },
];

function ChatSite() {
  return (
    <ChatApp>
      <Sidebar>
        <SideHead>
          <PlainButton aria-label="Close sidebar">
            <svg width="24" height="20" viewBox="0 0 24 20" fill="none" stroke="currentColor" strokeWidth="2">
              <rect x="2" y="1.500" width="20" height="17" rx="4" />
              <path d="M11 2v16M5 6h3M5 10h3" />
            </svg>
          </PlainButton>
          <PlainButton aria-label="New chat"><SquarePen size={21} /></PlainButton>
        </SideHead>
        <SideScroll>
          <SideLink href="#">
            <RoundMark $size={24}><RiOpenaiFill size={17} /></RoundMark>
            ChatGPT
          </SideLink>
          <SideLink href="#">
            <RoundMark $size={24} $plain>
              <svg width="16" height="16" viewBox="0 0 16 16" fill="none" stroke="#7d7d7d" strokeWidth="1.8">
                <circle cx="3.7" cy="3.7" r="2.6" />
                <circle cx="12.3" cy="3.7" r="2.6" />
                <circle cx="3.7" cy="12.3" r="2.6" />
                <circle cx="12.3" cy="12.3" r="2.6" />
              </svg>
            </RoundMark>
            Explore GPTs
          </SideLink>
          {groups.map((g) => (
            <React.Fragment key={g.label}>
              <SideLabel>{g.label}</SideLabel>
              {g.chats.map((c) => (
                <Chat key={c.title} href="#" $current={c.current}>
                  <ChatTitle $fade={c.fade} $size={c.size ?? 13}>
                    <bdi>{c.title}</bdi>
                  </ChatTitle>
                  {c.current && (
                    <svg width="14" height="4" viewBox="0 0 14 4" fill="#7d7d7d">
                      <circle cx="2" cy="2" r="1.7" />
                      <circle cx="7" cy="2" r="1.7" />
                      <circle cx="12" cy="2" r="1.7" />
                    </svg>
                  )}
                </Chat>
              ))}
            </React.Fragment>
          ))}
        </SideScroll>
        <SideFoot href="#">
          <RoundMark $size={28}>
            <svg width="16" height="16" viewBox="0 0 16 16" fill="none" stroke="#0d0d0d" strokeWidth="1.4">
              <path d="M8 1l6 3.500v7L8 15l-6-3.500v-7z" />
              <path d="M7 6.500l.8 2 2 .7-2 .8-.8 2-.8-2-2-.8 2-.7zM10.500 4.500v2M9.500 5.500h2" fill="#0d0d0d" strokeWidth=".8" />
            </svg>
          </RoundMark>
          <span>
            Upgrade plan
            <small>More access to the best models</small>
          </span>
        </SideFoot>
        <SideTrack>
          <ArrowHead />
          <SideThumb />
          <ArrowHead down />
        </SideTrack>
      </Sidebar>
      <Main>
        <MainHead>
          <ModelButton>ChatGPT <ChevronDown size={14} color="#b0b0b0" /></ModelButton>
          <ShareButton><Upload size={14} strokeWidth={2.4} /> Share</ShareButton>
          <Avatar>O</Avatar>
        </MainHead>
        <Thread>
          <Bubble>{lines.map((l) => <Line key={l.text} $hebrew={l.hebrew}>{l.text}</Line>)}</Bubble>
          <Reply>
            <RoundMark $size={32}><RiOpenaiFill size={19} color="#0d0d0d" /></RoundMark>
            <button>Analysis paused <ChevronDown size={15} /></button>
          </Reply>
          <Actions>
            <button aria-label="Read aloud"><Volume2 size={18} /></button>
            <button aria-label="Copy"><Copy size={17} /></button>
            <button aria-label="Good response"><ThumbsUp size={17} /></button>
            <button aria-label="Bad response"><ThumbsDown size={17} /></button>
            <button aria-label="Regenerate"><RefreshCw size={17} /><ChevronDown size={16} /></button>
          </Actions>
        </Thread>
        <Composer>
          <PlainButton type="button" aria-label="Attach file"><Paperclip size={20} strokeWidth={2.2} /></PlainButton>
          <input aria-label="Message ChatGPT" placeholder="Message ChatGPT" />
          <SendButton type="button" aria-label="Send"><ArrowUp size={20} strokeWidth={2.6} /></SendButton>
        </Composer>
        <Notice>ChatGPT can make mistakes. Check important info.</Notice>
        <MainTrack>
          <ArrowHead />
          <MainThumb />
          <ArrowHead down />
        </MainTrack>
        <HelpButton aria-label="Help">?</HelpButton>
      </Main>
    </ChatApp>
  );
}

export default function App() {
  return (
    <>
      <GlobalStyle />
      <Desktop>
        <ThemeProvider theme={{ k: 1 }}>
          <Screen $ratio="1920 / 1080">
            <Browser
              large
              strip="#d3e3fd"
              button="#e9f1fe"
              controls="#000"
              url="moodle.colman.ac.il/mod/quiz/attempt.php?attempt=149195&cmid=98305&page=5"
              tabs={[
                {
                  title: 'מטלה עיונית 2 - אפליקציה (עמוד',
                  icon: <Glyph $size={24}><CollegeMark small /></Glyph>,
                  dir: 'rtl',
                  active: true,
                },
              ]}
            />
            <CourseSite />
            <Taskbar full />
          </Screen>
        </ThemeProvider>
        <ThemeProvider theme={{ k: 2 / 3 }}>
          <Screen $ratio="1360 / 768">
            <Browser
              strip="#dee1e9"
              button="#fff"
              controls="#85878b"
              url="chatgpt.com/c/66fa8bf7-4700-8007-b6e0-1fd8625fe618"
              tabs={[
                { title: 'ChatGPT', icon: <Glyph $size={24} $color="#555"><RiOpenaiFill /></Glyph>, dir: 'ltr', active: true },
                { title: 'How to take a screenshot on a W', icon: <Glyph $size={22}><SwirlIcon /></Glyph>, dir: 'ltr' },
              ]}
            />
            <ChatSite />
            <Taskbar />
          </Screen>
        </ThemeProvider>
      </Desktop>
    </>
  );
}
